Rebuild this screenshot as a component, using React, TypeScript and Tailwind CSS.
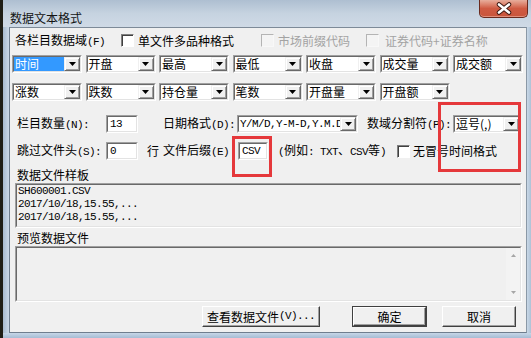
import React from 'react';

// ascii inside labels: SimSun-like half-width cells (6px)
function A({ children }: { children: React.ReactNode }) {
  return <span className="font-['Liberation_Mono',monospace] text-[11px] tracking-[-0.6px]">{children}</span>;
}

function Sunken({ className = '', inner = 'bg-white', children }: { className?: string; inner?: string; children?: React.ReactNode }) {
  return (
    <div className={`flex shrink-0 border border-t-[#a0a0a0] border-l-[#a0a0a0] border-r-white border-b-white ${className}`}>
      <div className={`flex-1 flex min-w-0 border border-t-[#696969] border-l-[#696969] border-r-[#e3e3e3] border-b-[#e3e3e3] ${inner}`}>
        {children}
      </div>
    </div>
  );
}

function Combo({ text, className = 'w-[70px]', selected, mono }: { text: string; className?: string; selected?: boolean; mono?: boolean }) {
  return (
    <Sunken className={`h-[18px] ${className}`}>
      <div
        className={`flex-1 min-w-0 whitespace-nowrap pl-[1px] leading-[14px] ${
          selected ? 'bg-[#3399ff] text-white' : 'bg-white text-black'
        } ${mono ? "overflow-x-clip font-['Liberation_Mono',monospace] text-[11px] tracking-[-0.6px]" : 'text-[12px]'}`}
      >
        {text}
      </div>
      <div className="w-[16px] h-full shrink-0 bg-[#f0f0f0] border border-t-[#f0f0f0] border-l-[#f0f0f0] border-r-[#696969] border-b-[#696969] shadow-[inset_1px_1px_0_#fff,inset_-1px_-1px_0_#a0a0a0] flex items-center justify-center">
        <svg width="7" height="4" viewBox="0 0 7 4">
          <path d="M0 0h7L3.5 4z" fill="#000" />
        </svg>
      </div>
    </Sunken>
  );
}

function Field({ text, className }: { text: string; className: string }) {
  return (
    <Sunken className={`h-[18px] ${className}`}>
      <div className="flex-1 pl-[2px] leading-[14px] font-['Liberation_Mono',monospace] text-[11px] tracking-[-0.6px] whitespace-nowrap">
        {text}
      </div>
    </Sunken>
  );
}

function Check({ disabled }: { disabled?: boolean }) {
  return (
    <div
      className={`w-[13px] h-[13px] shrink-0 border ${
        disabled
          ? 'border-t-[#b4b4b4] border-l-[#b4b4b4] border-r-[#f8f8f8] border-b-[#f8f8f8] bg-[#f4f4f4]'
          : 'border-t-[#808080] border-l-[#808080] border-r-white border-b-white bg-white shadow-[inset_1px_1px_0_#404040]'
      }`}
    />
  );
}

function Btn({ children, className, isDefault }: { children: React.ReactNode; className: string; isDefault?: boolean }) {
  return (
    <div className={`h-[21px] shrink-0 ${isDefault ? 'border border-[#404040]' : ''} ${className}`}>
      <div className="h-full flex items-center justify-center text-[12px] bg-[#f0f0f0] border border-t-white border-l-white border-r-[#404040] border-b-[#404040] shadow-[inset_-1px_-1px_0_#a0a0a0]">
        {children}
      </div>
    </div>
  );
}

const ROW1 = ['时间', '开盘', '最高', '最低', '收盘', '成交量', '成交额'];
const ROW2 = ['涨数', '跌数', '持仓量', '笔数', '开盘量', '开盘额'];

export default function App() {
  return (
    <div className="w-[531px] h-[338px] relative overflow-hidden flex bg-[#c2d2e3] text-black font-['Noto_Sans_CJK_SC',sans-serif]">
      <div className="w-[3px] h-full shrink-0 bg-[#1f1e16]" />
      <div className="flex-1 flex flex-col min-w-0">
        {/* title bar */}
        <div className="h-[27px] shrink-0 bg-gradient-to-b from-[#aebfd1] via-[#c6d3e0] to-[#cfdae6] pt-[4px] pl-[7px]">
          <span className="text-[12px] leading-[16px] text-[#141414]">数据文本格式</span>
        </div>

        <div className="flex-1 flex min-h-0">
          <div className="w-[6px] shrink-0 bg-gradient-to-r from-[#a8bbcf] to-[#cbd9e7]" />
          <div className="w-[518px] shrink-0 bg-[#f0f0f0] border border-t-[#7d8a98] border-l-[#6f7e8e] border-r-[#8a98a6] border-b-[#6f7e8e] flex flex-col pt-[5px] text-[12px]">
            {/* row 0 */}
            <div className="h-[15px] flex items-center pl-[5px] whitespace-nowrap">
              <span className="w-[106px] shrink-0">各栏目数据域<A>(F)</A></span>
              <Check />
              <span className="ml-[4px] w-[123px] shrink-0">单文件多品种格式</span>
              <Check disabled />
              <span className="ml-[4px] w-[88px] shrink-0 text-[#a3a3a3]">市场前缀代码</span>
              <Check disabled />
              <span className="ml-[6px] text-[#a3a3a3]">证券代码+证券名称</span>
            </div>

            {/* field combos */}
            <div className="mt-[7px] h-[18px] flex gap-[3.5px] pl-[2px]">
              {ROW1.map((t, i) => (
                <Combo key={t} text={t} selected={i === 0} />
              ))}
            </div>
            <div className="mt-[10px] h-[18px] flex gap-[3.5px] pl-[2px]">
              {ROW2.map((t) => (
                <Combo key={t} text={t} />
              ))}
            </div>

            {/* row 3 */}
            <div className="mt-[14px] h-[18px] flex items-center pl-[7px] whitespace-nowrap">
              <span className="w-[89px] shrink-0">栏目数量<A>(N):</A></span>
              <Field text="13" className="w-[32px]" />
              <span className="ml-[25px] w-[74px] shrink-0">日期格式<A>(D):</A></span>
              <Combo text="Y/M/D,Y-M-D,Y.M.D" className="w-[121px]" mono />
              <span className="ml-[9px] w-[86px] shrink-0">数域分割符<A>(P):</A></span>
              <Combo text="逗号(,)" className="w-[68px]" />
            </div>

            {/* row 4 */}
            <div className="mt-[9px] h-[18px] flex items-center pl-[7px] whitespace-nowrap">
              <span className="w-[89px] shrink-0">跳过文件头<A>(S):</A></span>
              <Field text="0" className="w-[32px]" />
              <span className="ml-[9px] w-[16px] shrink-0">行</span>
              <span className="w-[75px] shrink-0">文件后缀<A>(E)</A></span>
              <Field text="CSV" className="w-[30px]" />
              <span className="ml-[10px] w-[119px] shrink-0">
                <A>(</A>例如<A>: TXT</A>、<A>CSV</A>等<A>)</A>
              </span>
              <Check />
              <span className="ml-[3px]">无冒号时间格式</span>
            </div>

            {/* sample */}
            <div className="mt-[7px] h-[16px] leading-[16px] pl-[7px]">数据文件样板</div>
            <Sunken className="ml-[5px] w-[507px] h-[45px]" inner="bg-[#f0f0f0]">
              <div className="pl-[1px] font-['Liberation_Mono',monospace] text-[11px] tracking-[-0.6px] leading-[13px] whitespace-pre">
                <div>SH600001.CSV</div>
                <div>2017/10/18,15.55,...</div>
                <div>2017/10/18,15.55,...</div>
              </div>
            </Sunken>

            {/* preview */}
            <div className="mt-[2px] h-[16px] leading-[16px] pl-[7px]">预览数据文件</div>
            <Sunken className="ml-[5px] w-[507px] h-[56px]" inner="bg-[#f0f0f0]">
              <div className="flex-1" />
              <div className="w-[14px] h-full flex flex-col items-center justify-between py-[6px] bg-[#f3f3f3]">
                <svg width="5" height="3" viewBox="0 0 5 3">
                  <path d="M0 3h5L2.5 0z" fill="#a6a6a6" />
                </svg>
                <svg width="5" height="3" viewBox="0 0 5 3">
                  <path d="M0 0h5L2.5 3z" fill="#a6a6a6" />
                </svg>
              </div>
            </Sunken>

            {/* buttons */}
            <div className="mt-[4px] h-[21px] flex pl-[192px]">
              <Btn className="w-[118px]">
                查看数据文件<A>(V)...</A>
              </Btn>
              <Btn className="ml-[32px] w-[75px]" isDefault>
                确定
              </Btn>
              <Btn className="ml-[15px] w-[74px]">取消</Btn>
            </div>
          </div>
          <div className="flex-1 bg-gradient-to-r from-[#c9d8e7] to-[#aec2d6]" />
        </div>
        <div className="h-[5px] shrink-0 bg-gradient-to-b from-[#c7d7e7] to-[#a5bcd4]" />
      </div>

      {/* close button */}
      <div className="absolute left-[479px] top-0 w-[49px] h-[18px] rounded-b-[5px] border border-t-0 border-[#6a2a1e] bg-gradient-to-b from-[#e7ad9c] via-[#cf5a42] to-[#c9553c] shadow-[inset_0_-1px_0_#e08f7c]">
        <svg width="47" height="17" viewBox="0 0 47 17" className="block">
          <path d="M19 4.5L29 12.5M29 4.5L19 12.5" stroke="#3b1710" strokeWidth="4.5" strokeLinecap="round" />
          <path d="M19 4.5L29 12.5M29 4.5L19 12.5" stroke="#ffffff" strokeWidth="2.6" strokeLinecap="round" />
        </svg>
      </div>

      {/* red annotation boxes */}
      <div className="absolute left-[232px] top-[136px] w-[40px] h-[41px] border-[3px] border-[#e5383b]" />
      <div className="absolute left-[438px] top-[102px] w-[83px] h-[70px] border-[3px] border-[#e5383b]" />
    </div>
  );
}
